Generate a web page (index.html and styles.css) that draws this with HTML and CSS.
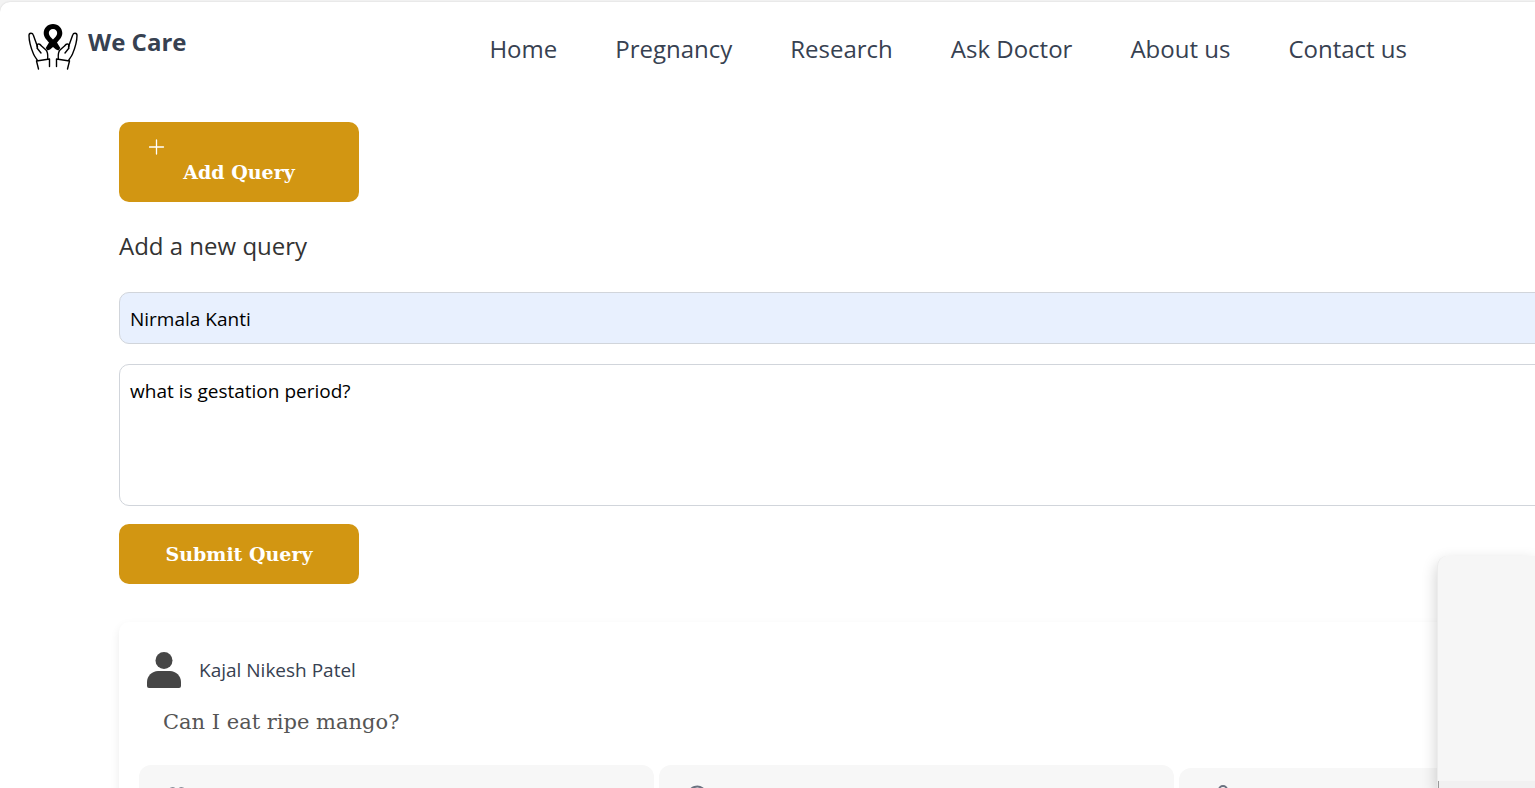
FILE: index.html
```html
<!DOCTYPE html>
<html lang="en">
<head>
<meta charset="utf-8">
<meta name="viewport" content="width=device-width, initial-scale=1">
<title>We Care</title>
<link rel="stylesheet" href="styles.css">
</head>
<body>
<div class="page">
  <header class="topbar">
    <a class="brand" href="#">
      <svg class="brand-logo" viewBox="0 0 50 48" fill="none" stroke="#000" stroke-width="1.4" stroke-linecap="round" stroke-linejoin="round" aria-hidden="true">
        <path fill="#000" fill-rule="evenodd" stroke="none" d="M25 0c-5.400 0-9.300 4-9.300 9 0 4 2.600 6.500 5.300 9.500l-3.300 5.500 1.800 2.500 2.500-1 3-2.500 3 2.500 2.500 1 1.800-2.500-3.300-5.500c2.700-3 5.300-5.500 5.300-9.500 0-5-3.900-9-9.300-9zm0 5c2.500 0 4.200 1.700 4.200 4 0 2.300-2.200 4.600-4.200 6.500-2-1.900-4.200-4.200-4.200-6.500 0-2.300 1.700-4 4.200-4z"/>
        <g id="hand">
          <path d="M10.500 45 8.500 37M8.500 37 21.500 35v7.500M9.500 36.500C8.500 34.500 7 33.500 5.500 30 3 24 1 17 1 11.500 1 8.500 4.500 8.500 5.300 11L8 18.500C8.500 20 9 21 9.500 22.500"/>
          <path d="M9.500 24C7.800 20 11 18.500 13.500 22L18 26C20 28 20 30 19.700 34.500M9 24l4 5"/>
        </g>
        <use href="#hand" transform="matrix(-1 0 0 1 50 0)"/>
      </svg>
      <span class="brand-name">We Care</span>
    </a>
    <nav class="menu" aria-label="Main">
      <a href="#">Home</a>
      <a href="#">Pregnancy</a>
      <a href="#">Research</a>
      <a href="#">Ask Doctor</a>
      <a href="#">About us</a>
      <a href="#">Contact us</a>
    </nav>
  </header>

  <main class="content">
    <button class="btn btn-add" type="button">
      <svg class="plus" viewBox="0 0 16 16" stroke="#fff" stroke-width="1.300" stroke-linecap="round" aria-hidden="true"><path d="M7.500 1v14M.5 8h14"/></svg>
      <span>Add Query</span>
    </button>

    <form class="query-form">
      <h1 class="form-title">Add a new query</h1>
      <input class="field field-name" type="text" value="Nirmala Kanti" aria-label="Name">
      <textarea class="field field-query" aria-label="Query">what is gestation period?</textarea>
      <button class="btn" type="submit">Submit Query</button>
    </form>

    <article class="card">
      <div class="author">
        <svg class="avatar" viewBox="0 0 34 36" fill="#464646" aria-hidden="true"><circle cx="17" cy="8.500" r="8.500"/><path d="M0 34v-4c0-6 5-11 11-11h12c6 0 11 5 11 11v4q0 2-2 2H2q-2 0-2-2z"/></svg>
        <span>Kajal Nikesh Patel</span>
      </div>
      <p class="question">Can I eat ripe mango?</p>
      <div class="actions">
        <button class="action" type="button" aria-label="Like">
          <svg viewBox="0 0 24 24" aria-hidden="true"><path d="M12 21 4 13C-1 7 7-1 12 6c5-7 13 1 8 7z"/></svg>
        </button>
        <button class="action" type="button" aria-label="Comment">
          <svg viewBox="0 0 24 24" aria-hidden="true"><path d="M4 20l1-4a9 9 0 1 1 4 3z"/></svg>
        </button>
        <button class="action action-share" type="button" aria-label="Share">
          <svg viewBox="0 0 24 24" aria-hidden="true"><circle cx="18" cy="5" r="4"/><circle cx="6" cy="12" r="4"/><circle cx="18" cy="19" r="4"/><path d="m9 10 6-3M9 14l6 3"/></svg>
        </button>
      </div>
    </article>
  </main>
</div>
<aside class="popup"><div class="popup-body"></div></aside>
</body>
</html>
```
FILE: styles.css
```css
* {
  box-sizing: border-box;
}

body {
  margin: 0;
  height: 100vh;
  overflow: hidden;
  background: #f3f3f3;
  color: #333;
  font-family: "Segoe UI", "Open Sans", "Noto Sans", sans-serif;
}

.page {
  margin-top: 2px;
  min-height: 100vh;
  background: #fff;
  border-top-left-radius: 10px;
  box-shadow: 0 0 2px rgba(0, 0, 0, 0.15);
}

.topbar {
  display: flex;
  justify-content: space-between;
  align-items: flex-start;
  padding: 22px 128px 0 28px;
  height: 120px;
}

.brand {
  display: flex;
  gap: 10px;
  color: #374151;
  text-decoration: none;
}

.brand-logo {
  width: 50px;
  height: 48px;
}

.brand-name {
  font-size: 24px;
  font-weight: 700;
  line-height: 36px;
}

.menu {
  display: flex;
  gap: 58px;
  padding-top: 6px;
}

.menu a {
  color: #374151;
  font-size: 24px;
  line-height: 38px;
  text-decoration: none;
}

.content {
  margin-left: 119px;
  margin-right: -20px;
}

.btn {
  display: block;
  width: 240px;
  height: 60px;
  padding: 0;
  border: 0;
  border-radius: 10px;
  background: #d29612;
  color: #fff;
  font-family: Georgia, "DejaVu Serif", serif;
  font-size: 19px;
  font-weight: 700;
  line-height: 30px;
}

.btn-add {
  display: flex;
  flex-direction: column;
  gap: 2px;
  height: 80px;
  padding: 17px 30px 0;
}

.btn-add span {
  align-self: center;
}

.plus {
  width: 16px;
  height: 16px;
}

.form-title {
  margin: 24px 0 26px;
  font-size: 24px;
  font-weight: 400;
  line-height: 40px;
}

.field {
  display: block;
  width: 100%;
  padding: 11px 10px 9px;
  border: 1px solid #d1d5db;
  border-radius: 10px;
  color: #000;
  font-family: "Segoe UI", "Open Sans", "Noto Sans", sans-serif;
  font-size: 19px;
  line-height: 30px;
}

.field-name {
  height: 52px;
  background: #e8f0fe;
}

.field-query {
  height: 142px;
  margin: 20px 0 18px;
  resize: none;
}

.card {
  margin-top: 38px;
  padding: 30px 20px 20px;
  border-radius: 10px;
  box-shadow: 0 4px 10px rgba(0, 0, 0, 0.08);
}

.author {
  display: flex;
  align-items: center;
  gap: 18px;
  padding-left: 8px;
  color: #374151;
  font-size: 19px;
  line-height: 36px;
}

.avatar {
  width: 34px;
  height: 36px;
}

.question {
  margin: 14px 0 23px 24px;
  color: #555;
  font-family: Georgia, "DejaVu Serif", serif;
  font-size: 21px;
  line-height: 40px;
}

.actions {
  display: grid;
  grid-template-columns: repeat(3, 515px);
  gap: 5px;
}

.action {
  height: 60px;
  padding: 20px 26px;
  border: 0;
  border-radius: 12px;
  background: #f7f7f7;
  text-align: left;
}

.action svg {
  display: block;
  width: 24px;
  height: 24px;
  fill: none;
  stroke: #6b7280;
  stroke-width: 2;
}

.action-share {
  margin-top: 3px;
  padding-top: 17px;
}

.popup {
  position: fixed;
  right: 0;
  bottom: 0;
  width: 98px;
  height: 232px;
  padding-top: 225px;
  border-left: 1px solid #ececec;
  border-top-left-radius: 10px;
  background: #f6f6f6;
  box-shadow: 0 6px 16px rgba(0, 0, 0, 0.2);
}

.popup-body {
  height: 7px;
  border-left: 1px solid #999;
  background: #f1f1f1;
}
```
